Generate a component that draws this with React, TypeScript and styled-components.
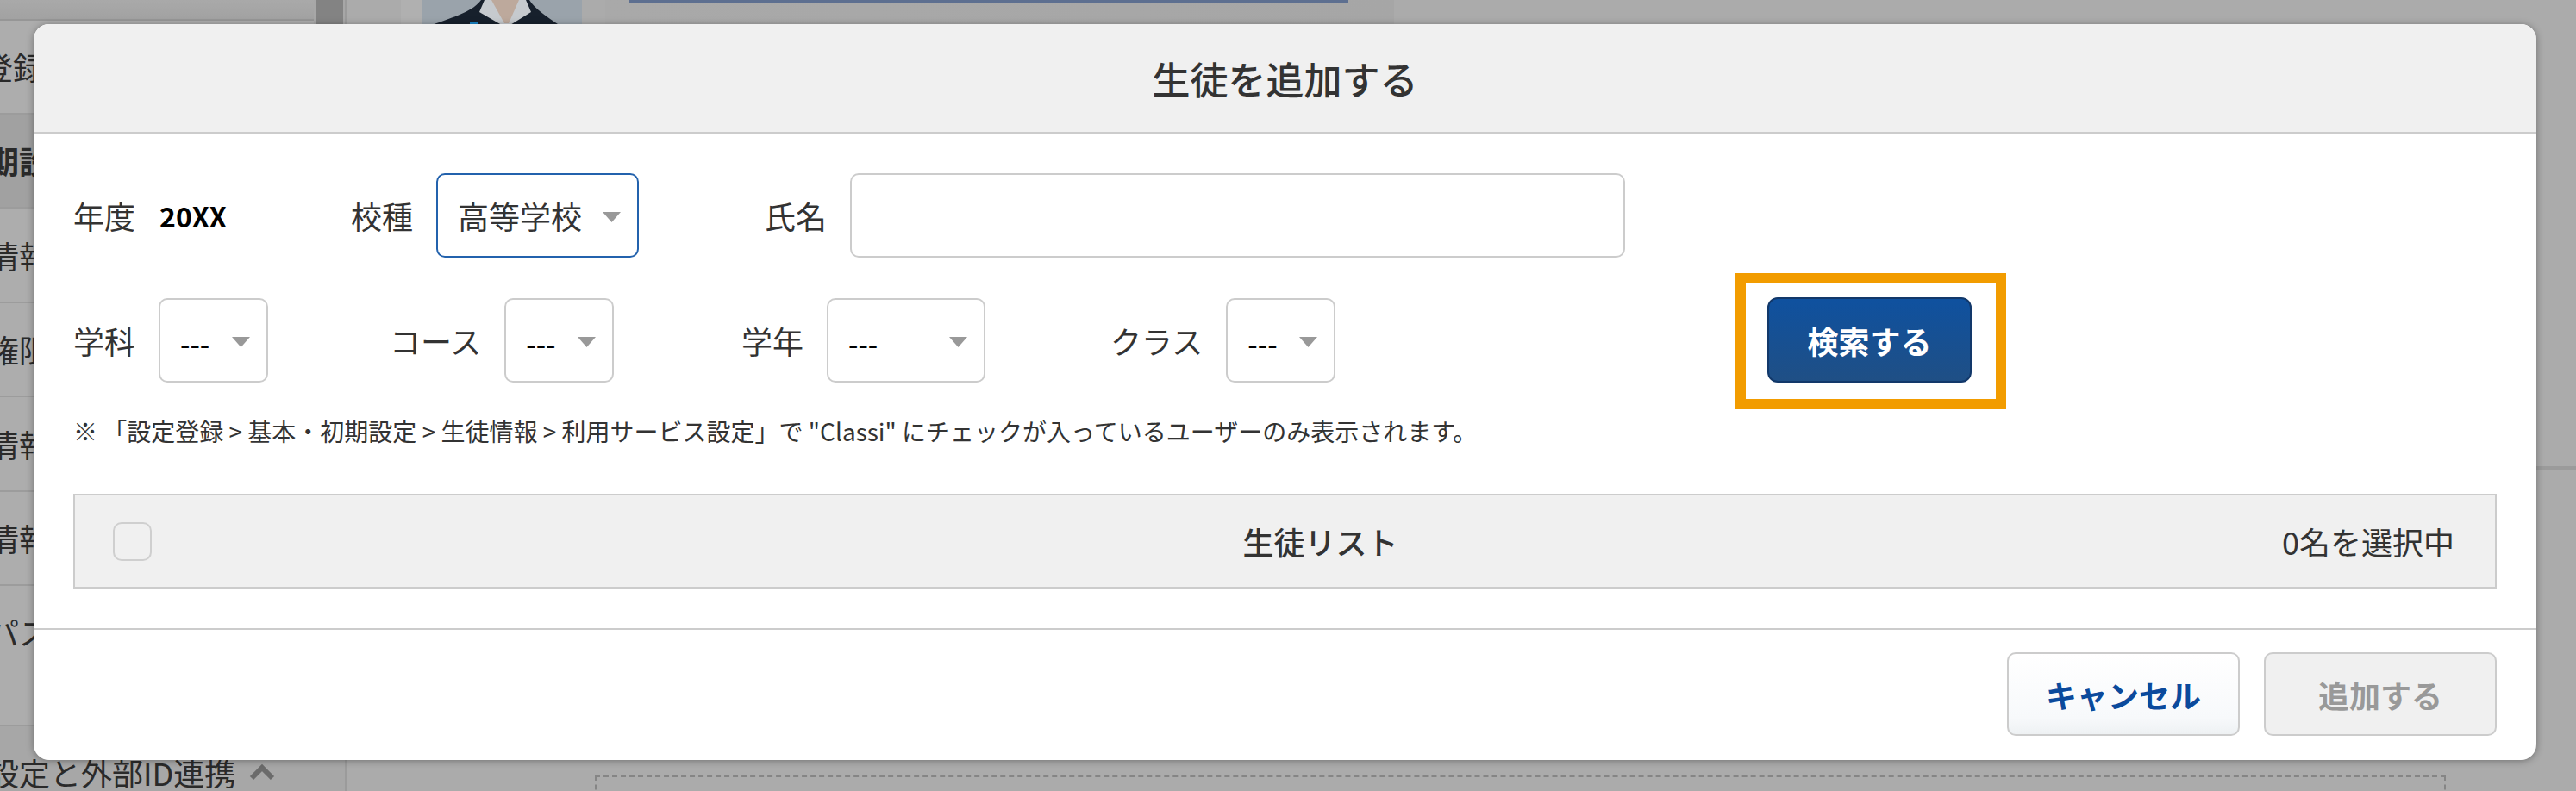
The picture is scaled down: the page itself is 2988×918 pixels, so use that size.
import React from "react";
import styled, { createGlobalStyle } from "styled-components";

const Global = createGlobalStyle`
  html, body { margin: 0; padding: 0; background: #ababab; overflow: hidden; }
  * { box-sizing: border-box; }
  body { font-family: "Noto Sans CJK JP", "Noto Sans", sans-serif; color: #333; }
`;

const Page = styled.div`
  position: relative;
  width: 2988px;
  height: 918px;
  overflow: hidden;
  display: flex;
`;

/* ---------- page behind the dialog ---------- */
const Sidebar = styled.aside`
  flex: 0 0 402px;
  height: 918px;
  display: flex;
  background: #a7a7a7;
  border-right: 2px solid #9b9b9b;
  overflow: hidden;
`;
const Nav = styled.nav`
  flex: 0 0 364px;
  display: flex;
  flex-direction: column;
`;
const NavTop = styled.div`
  height: 24px;
  flex: none;
  background: linear-gradient(#a9a9a9, #a2a2a2);
  border-bottom: 2px solid #969696;
`;
const NavRow = styled.div<{ $dark?: boolean; $h: number; $top?: boolean }>`
  flex: none;
  height: ${(p) => p.$h}px;
  display: flex;
  align-items: ${(p) => (p.$top ? "flex-start" : "center")};
  padding-top: ${(p) => (p.$top ? "27px" : "0")};
  background: ${(p) => (p.$dark ? "#a1a1a1" : "#adadad")};
  border-bottom: 2px solid #9c9c9c;
`;
const NavText = styled.span<{ $shift: number; $bold?: boolean }>`
  margin-left: ${(p) => p.$shift}px;
  font-size: 36px;
  line-height: 52px;
  white-space: nowrap;
  color: #2a2a2a;
  font-weight: ${(p) => (p.$bold ? 700 : 400)};
`;
const NavSection = styled.div`
  display: flex;
  align-items: flex-start;
  padding-top: 27px;
  gap: 16px;
`;
const SectionChevron = styled.svg`
  width: 30px;
  height: 20px;
  margin-top: 16px;
  flex: none;
`;
const Rail = styled.div`
  flex: 0 0 32px;
  margin-left: 2px;
  height: 40px;
  background: #838383;
`;
const Main = styled.main`
  flex: 1;
  display: flex;
  flex-direction: column;
  min-width: 0;
`;
const TopBand = styled.div`
  flex: none;
  height: 40px;
  display: flex;
  background: #ababab;
`;
const BandGap = styled.div`
  flex: 0 0 63px;
`;
const PhotoMat = styled.div`
  flex: 0 0 25px;
  background: #b0b0b0;
`;
const Photo = styled.svg`
  flex: 0 0 185px;
  width: 185px;
  height: 40px;
  display: block;
`;
const ProfilePanel = styled.div`
  flex: 0 0 915px;
  margin-left: 27px;
  padding-left: 28px;
  background: linear-gradient(90deg, #a9a9a9, #a6a6a6);
`;
const BlueRule = styled.div`
  height: 3px;
  width: 834px;
  background: #5d6f90;
`;
const SectionRule = styled.div`
  flex: none;
  margin-top: 501px;
  height: 4px;
  background: #9b9b9b;
`;
const DashedBox = styled.div`
  flex: none;
  margin: 355px 151px 0 288px;
  height: 100px;
  border: 2px dashed #858585;
`;

/* ---------- dialog ---------- */
const Dialog = styled.section`
  position: absolute;
  top: 28px;
  left: 39px;
  width: 2903px;
  background: #fff;
  border-radius: 18px;
  box-shadow: 0 1px 8px rgba(0, 0, 0, 0.35);
  display: flex;
  flex-direction: column;
  overflow: hidden;
`;
const Header = styled.header`
  height: 127px;
  display: flex;
  align-items: center;
  justify-content: center;
  background: #f0f0f0;
  border-bottom: 2px solid #cccccc;
`;
const Title = styled.h2`
  margin: 0;
  font-size: 44px;
  font-weight: 500;
  color: #333;
  line-height: 1;
`;
const Body = styled.div`
  padding: 46px 46px 46px;
  display: flex;
  flex-direction: column;
`;
const FormRow = styled.div`
  display: flex;
  align-items: center;
  min-height: 98px;
  & + & {
    margin-top: 46px;
  }
`;
const Field = styled.div<{ $w: number }>`
  flex: 0 0 ${(p) => p.$w}px;
  display: flex;
  align-items: center;
  gap: 27px;
`;
const Label = styled.span`
  font-size: 36px;
  line-height: 50px;
  color: #333;
  white-space: nowrap;
`;
const YearValue = styled.span`
  font-size: 32px;
  font-weight: 700;
  line-height: 50px;
  color: #000;
  margin-left: 1px;
`;
const Select = styled.div<{ $w: number; $focus?: boolean }>`
  width: ${(p) => p.$w}px;
  height: 98px;
  flex: none;
  display: flex;
  align-items: center;
  justify-content: space-between;
  padding: 0 19px 0 23px;
  background: #fff;
  border: 2px solid ${(p) => (p.$focus ? "#2362ad" : "#cccccc")};
  border-radius: 10px;
`;
const SelectText = styled.span<{ $dash?: boolean }>`
  font-size: ${(p) => (p.$dash ? "32px" : "36px")};
  font-weight: ${(p) => (p.$dash ? 500 : 400)};
  color: ${(p) => (p.$dash ? "#000" : "#333")};
  line-height: 50px;
  position: relative;
  top: ${(p) => (p.$dash ? "3px" : "0")};
  white-space: nowrap;
`;
const Caret = styled.svg`
  width: 21px;
  height: 12px;
  flex: none;
  position: relative;
  top: 2px;
`;
const NameInput = styled.input`
  width: 899px;
  height: 98px;
  flex: none;
  border: 2px solid #cccccc;
  border-radius: 10px;
  background: #fff;
  outline: none;
`;
const SearchSlot = styled.div`
  position: relative;
  margin-left: 500px;
  flex: none;
`;
const SearchButton = styled.button`
  display: block;
  width: 237px;
  height: 99px;
  padding: 0;
  font: inherit;
  font-size: 36px;
  font-weight: 700;
  color: #fff;
  background: linear-gradient(#0f519f, #1f4f85);
  border: 2px solid #12386a;
  border-radius: 12px;
`;
const Highlight = styled.div`
  position: absolute;
  top: -28px;
  left: -37px;
  right: -40px;
  bottom: -31px;
  border: 12px solid #f29c00;
  pointer-events: none;
`;
const Note = styled.p`
  margin: 36px 0 0;
  font-size: 28px;
  line-height: 40px;
  color: #333;
  white-space: nowrap;
`;
const ListHead = styled.div`
  margin-top: 53px;
  height: 110px;
  display: flex;
  align-items: center;
  padding: 0 47px 0 44px;
  background: #f0f0f0;
  border: 2px solid #cccccc;
`;
const Check = styled.span`
  flex: none;
  width: 45px;
  height: 45px;
  margin-right: 240px;
  border: 2px solid #cfcfcf;
  border-radius: 10px;
  background: #f0f0f0;
`;
const ListTitle = styled.div`
  flex: 1;
  text-align: center;
  font-size: 36px;
  font-weight: 500;
  color: #333;
`;
const ListCount = styled.div`
  flex: none;
  font-size: 36px;
  color: #333;
`;
const Footer = styled.footer`
  border-top: 2px solid #cccccc;
  padding: 26px 46px 28px;
  display: flex;
  justify-content: flex-end;
  gap: 28px;
`;
const FootButton = styled.button<{ $off?: boolean }>`
  width: 270px;
  height: 97px;
  padding: 0;
  font: inherit;
  font-size: 36px;
  font-weight: 700;
  color: ${(p) => (p.$off ? "#999999" : "#0b4a9c")};
  background: ${(p) =>
    p.$off ? "#f0f0f0" : "linear-gradient(#ffffff, #f7f9fb 80%, #eef1f3)"};
  border: 2px solid #cccccc;
  border-radius: 10px;
`;

const CaretIcon = () => (
  <Caret viewBox="0 0 21 12">
    <polygon points="0,0 21,0 10.5,12" fill="#999999" />
  </Caret>
);

const Picker = ({ w, text, dash, focus }: { w: number; text: string; dash?: boolean; focus?: boolean }) => (
  <Select $w={w} $focus={focus}>
    <SelectText $dash={dash}>{text}</SelectText>
    <CaretIcon />
  </Select>
);

export default function App() {
  return (
    <>
      <Global />
      <Page>
        <Sidebar>
          <Nav>
            <NavTop />
            <NavRow $h={108.5}><NavText $shift={-93}>設定登録</NavText></NavRow>
            <NavRow $h={109.5} $dark><NavText $shift={-158} $bold>基本・初期設定</NavText></NavRow>
            <NavRow $h={109.5}><NavText $shift={-86}>生徒情報</NavText></NavRow>
            <NavRow $h={109.5}><NavText $shift={-14}>権限設定</NavText></NavRow>
            <NavRow $h={109.5}><NavText $shift={-86}>教員情報</NavText></NavRow>
            <NavRow $h={109.5}><NavText $shift={-86}>職員情報</NavText></NavRow>
            <NavRow $h={163} $top><NavText $shift={-14}>パスワード</NavText></NavRow>
            <NavSection>
              <NavText $shift={-14}>設定と外部ID連携</NavText>
              <SectionChevron viewBox="0 0 30 20">
                <polyline points="3,17 15,5 27,17" fill="none" stroke="#6b6b6b" strokeWidth="6" />
              </SectionChevron>
            </NavSection>
          </Nav>
          <Rail />
        </Sidebar>
        <Main>
          <TopBand>
            <BandGap />
            <PhotoMat />
            <Photo viewBox="0 0 185 40">
              <rect width="185" height="40" fill="#9aa3ab" />
              <path d="M8 30 C 35 20 58 14 68 0 L 124 0 C 130 10 145 20 160 30 L 160 40 L 8 40 Z" fill="#17202c" />
              <polygon points="72,0 120,0 126,14 97,32 66,14" fill="#c6cace" />
              <polygon points="80,0 112,0 100,27 95,27" fill="#bda99c" />
              <rect x="55" y="26" width="9" height="6" fill="#1a86c8" />
            </Photo>
            <ProfilePanel>
              <BlueRule />
            </ProfilePanel>
          </TopBand>
          <SectionRule />
          <DashedBox />
        </Main>

        <Dialog>
          <Header>
            <Title>生徒を追加する</Title>
          </Header>
          <Body>
            <FormRow>
              <Field $w={322}>
                <Label>年度</Label>
                <YearValue>20XX</YearValue>
              </Field>
              <Field $w={480}>
                <Label>校種</Label>
                <Picker w={235} text="高等学校" focus />
              </Field>
              <Field $w={1000}>
                <Label>氏名</Label>
                <NameInput />
              </Field>
            </FormRow>
            <FormRow>
              <Field $w={367}>
                <Label>学科</Label>
                <Picker w={127} text="---" dash />
              </Field>
              <Field $w={408}>
                <Label>コース</Label>
                <Picker w={127} text="---" dash />
              </Field>
              <Field $w={428}>
                <Label>学年</Label>
                <Picker w={184} text="---" dash />
              </Field>
              <Field $w={262}>
                <Label>クラス</Label>
                <Picker w={127} text="---" dash />
              </Field>
              <SearchSlot>
                <SearchButton>検索する</SearchButton>
                <Highlight />
              </SearchSlot>
            </FormRow>
            <Note>※ 「設定登録 &gt; 基本・初期設定 &gt; 生徒情報 &gt; 利用サービス設定」で "Classi" にチェックが入っているユーザーのみ表示されます。</Note>
            <ListHead>
              <Check />
              <ListTitle>生徒リスト</ListTitle>
              <ListCount>0名を選択中</ListCount>
            </ListHead>
          </Body>
          <Footer>
            <FootButton>キャンセル</FootButton>
            <FootButton $off>追加する</FootButton>
          </Footer>
        </Dialog>
      </Page>
    </>
  );
}
